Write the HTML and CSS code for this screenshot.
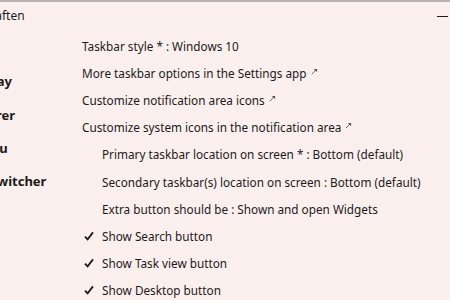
FILE: index.html
```html
<!DOCTYPE html>
<html>
<head>
<meta charset="utf-8">
<link rel="stylesheet" href="styles.css">
</head>
<body>
<div class="window">
  <div class="titlebar">
    <span class="title">Eigenschaften</span>
    <span class="minimize"></span>
  </div>
  <div class="main">
    <nav class="sidebar">
      <div class="nav-item">Taskbar</div>
      <div class="nav-item">System tray</div>
      <div class="nav-item">File Explorer</div>
      <div class="nav-item">Start menu</div>
      <div class="nav-item">Window switcher</div>
      <div class="nav-item">Weather</div>
      <div class="nav-item">Other</div>
    </nav>
    <div class="content">
      <div class="row">Taskbar style * : Windows 10</div>
      <div class="row">More taskbar options in the Settings app <svg class="ext" viewBox="0 0 8 8"><path d="M1 7 L6.5 1.5"/><path class="head" d="M3.2 1 H7 V4.8 Z"/></svg></div>
      <div class="row">Customize notification area icons <svg class="ext" viewBox="0 0 8 8"><path d="M1 7 L6.5 1.5"/><path class="head" d="M3.2 1 H7 V4.8 Z"/></svg></div>
      <div class="row">Customize system icons in the notification area <svg class="ext" viewBox="0 0 8 8"><path d="M1 7 L6.5 1.5"/><path class="head" d="M3.2 1 H7 V4.8 Z"/></svg></div>
      <div class="row sub">Primary taskbar location on screen * : Bottom (default)</div>
      <div class="row sub">Secondary taskbar(s) location on screen : Bottom (default)</div>
      <div class="row sub">Extra button should be : Shown and open Widgets</div>
      <div class="row check"><svg class="tick" viewBox="0 0 10 10"><path d="M1 5.6 L3.6 8.4 L9 1.4"/></svg>Show Search button</div>
      <div class="row check"><svg class="tick" viewBox="0 0 10 10"><path d="M1 5.6 L3.6 8.4 L9 1.4"/></svg>Show Task view button</div>
      <div class="row check"><svg class="tick" viewBox="0 0 10 10"><path d="M1 5.6 L3.6 8.4 L9 1.4"/></svg>Show Desktop button</div>
    </div>
  </div>
</div>
</body>
</html>
```
FILE: styles.css
```css
html, body {
  margin: 0;
  padding: 0;
}
body {
  width: 450px;
  height: 300px;
  overflow: hidden;
  background: #fcf0ef;
  font-family: "Noto Sans", "Open Sans", sans-serif;
  color: #1c1a1a;
}
.window {
  border-top: 2px solid #b9b3b3;
  height: 298px;
  overflow: hidden;
}
.titlebar {
  height: 28px;
  display: flex;
  align-items: center;
  justify-content: space-between;
  font-size: 12px;
}
.title {
  margin-left: -55px;
  margin-top: -2px;
}
.minimize {
  width: 11px;
  height: 1px;
  background: #1c1a1a;
  margin-right: 2px;
}
.main {
  display: flex;
}
.sidebar {
  width: 82px;
  flex: none;
  overflow: hidden;
  padding-top: 2px;
}
.nav-item {
  margin-left: -65px;
  height: 33.3px;
  line-height: 33.3px;
  font-size: 13px;
  font-weight: 700;
  white-space: nowrap;
}
.content {
  flex: 1;
  font-size: 11.75px;
  padding-top: 2px;
}
.row {
  height: 27.2px;
  display: flex;
  align-items: center;
  white-space: nowrap;
}
.row.sub {
  padding-left: 20px;
}
.row.check {
  padding-left: 2px;
}
.tick {
  width: 10px;
  height: 10px;
  margin-right: 8px;
  fill: none;
  stroke: #1c1a1a;
  stroke-width: 1.8;
}
.ext {
  width: 7px;
  height: 7px;
  margin-left: 4px;
  margin-top: -3px;
  stroke: #555;
  stroke-width: 1;
  fill: none;
}
.ext .head {
  fill: #555;
  stroke: none;
}
```
